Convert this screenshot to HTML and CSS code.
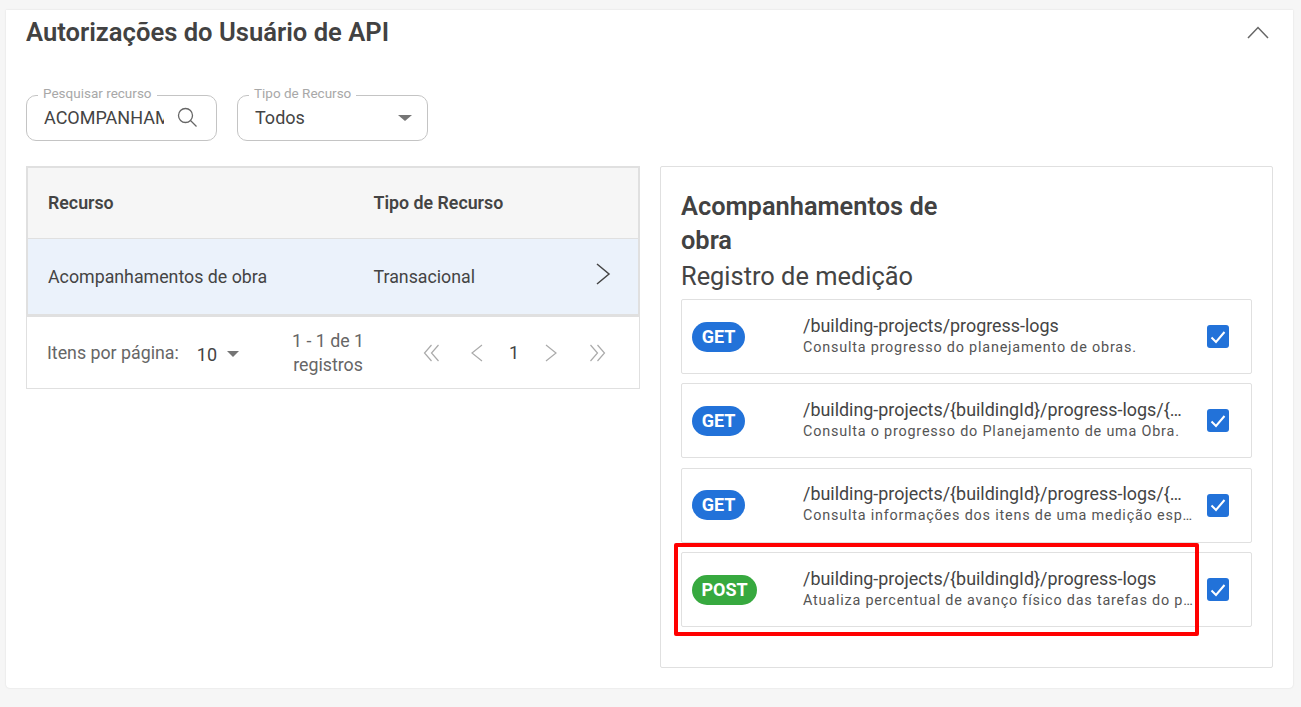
FILE: index.html
```html
<!DOCTYPE html>
<html lang="pt-BR">
<head>
<meta charset="utf-8">
<title>Autorizações do Usuário de API</title>
<link rel="stylesheet" href="styles.css">
</head>
<body>
<main class="card">
  <header class="card-head">
    <h1 class="card-title">Autorizações do Usuário de API</h1>
    <svg class="collapse" width="24" height="14" viewBox="0 0 24 14"><path d="M2 13 L12 2.500 L22 13" fill="none" stroke="#666" stroke-width="1.500"/></svg>
  </header>
  <div class="filters">
    <div class="field">
      <span class="field-label">Pesquisar recurso</span>
      <span class="field-value clip">ACOMPANHAM</span>
      <svg class="search-ic" width="22" height="22" viewBox="0 0 22 22"><circle cx="9.500" cy="9.500" r="7" fill="none" stroke="#666" stroke-width="1.300"/><path d="M14.500 14.500 L20.500 20.500" stroke="#666" stroke-width="1.300"/></svg>
    </div>
    <div class="field">
      <span class="field-label">Tipo de Recurso</span>
      <span class="field-value">Todos</span>
      <span class="caret caret-lg"></span>
    </div>
  </div>
  <div class="columns">
    <section class="table-box">
      <div class="t-head">
        <span class="col-a">Recurso</span>
        <span class="col-b">Tipo de Recurso</span>
      </div>
      <div class="t-row">
        <span class="col-a">Acompanhamentos de obra</span>
        <span class="col-b">Transacional</span>
        <svg class="row-arrow" width="16" height="24" viewBox="0 0 16 24"><path d="M2 2 L14 12 L2 22" fill="none" stroke="#444" stroke-width="1.500"/></svg>
      </div>
      <div class="pager">
        <span class="pager-label">Itens por página:</span>
        <span class="pager-size">10</span>
        <span class="caret"></span>
        <span class="pager-count">1 - 1 de 1<br>registros</span>
        <nav class="pager-nav">
          <svg width="18" height="18" viewBox="0 0 18 18"><path d="M8.500 1 L1.500 9 L8.500 17 M15.500 1 L8.500 9 L15.500 17" fill="none" stroke="#aaa" stroke-width="1.200"/></svg>
          <svg width="22" height="18" viewBox="0 0 22 18"><path d="M17 1 L7 9 L17 17" fill="none" stroke="#aaa" stroke-width="1.200"/></svg>
          <span class="page-num">1</span>
          <svg width="22" height="18" viewBox="0 0 22 18"><path d="M6 1 L16 9 L6 17" fill="none" stroke="#aaa" stroke-width="1.200"/></svg>
          <svg class="nav-last" width="18" height="18" viewBox="0 0 18 18"><path d="M2.500 1 L9.500 9 L2.500 17 M9.500 1 L16.500 9 L9.500 17" fill="none" stroke="#aaa" stroke-width="1.200"/></svg>
        </nav>
      </div>
    </section>
    <section class="detail">
      <h2 class="detail-title">Acompanhamentos de obra</h2>
      <p class="detail-sub">Registro de medição</p>
      <ul class="endpoints">
        <li class="endpoint">
          <span class="badge get">GET</span>
          <div class="ep-text">
            <div class="ep-path">/building-projects/progress-logs</div>
            <div class="ep-desc">Consulta progresso do planejamento de obras.</div>
          </div>
          <span class="check"><svg width="16" height="14" viewBox="0 0 16 14"><path d="M1.500 7.500 L6 12 L14.500 2" fill="none" stroke="#fff" stroke-width="2"/></svg></span>
        </li>
        <li class="endpoint">
          <span class="badge get">GET</span>
          <div class="ep-text">
            <div class="ep-path ep-cut">/building-projects/{buildingId}/progress-logs/{…</div>
            <div class="ep-desc">Consulta o progresso do Planejamento de uma Obra.</div>
          </div>
          <span class="check"><svg width="16" height="14" viewBox="0 0 16 14"><path d="M1.500 7.500 L6 12 L14.500 2" fill="none" stroke="#fff" stroke-width="2"/></svg></span>
        </li>
        <li class="endpoint">
          <span class="badge get">GET</span>
          <div class="ep-text">
            <div class="ep-path ep-cut">/building-projects/{buildingId}/progress-logs/{…</div>
            <div class="ep-desc">Consulta informações dos itens de uma medição esp…</div>
          </div>
          <span class="check"><svg width="16" height="14" viewBox="0 0 16 14"><path d="M1.500 7.500 L6 12 L14.500 2" fill="none" stroke="#fff" stroke-width="2"/></svg></span>
        </li>
        <li class="endpoint">
          <span class="badge post">POST</span>
          <div class="ep-text">
            <div class="ep-path">/building-projects/{buildingId}/progress-logs</div>
            <div class="ep-desc">Atualiza percentual de avanço físico das tarefas do p…</div>
          </div>
          <span class="check"><svg width="16" height="14" viewBox="0 0 16 14"><path d="M1.500 7.500 L6 12 L14.500 2" fill="none" stroke="#fff" stroke-width="2"/></svg></span>
          <span class="highlight"></span>
        </li>
      </ul>
    </section>
  </div>
</main>
</body>
</html>
```
FILE: styles.css
```css
* { box-sizing: border-box; }
html, body { margin: 0; height: 707px; overflow: hidden; }
body {
  background: #f6f6f6;
  font-family: Roboto, "Liberation Sans", sans-serif;
  color: #444;
  padding: 10px 8px 0 6px;
}
.card {
  height: 678px;
  background: #fff;
  border-radius: 0 0 4px 4px;
  box-shadow: 0 0 2px rgba(0,0,0,.12);
  padding: 0 20px 20px 20px;
}
.card-head {
  display: flex;
  justify-content: space-between;
  align-items: center;
  height: 44px;
}
.card-title { margin: 0; font-size: 25.600px; line-height: 44px; font-weight: 600; color: #424242; }
.collapse { margin: 0 3px 0 0; }
.filters { display: flex; gap: 20px; margin-top: 41px; }
.field {
  position: relative;
  width: 191px;
  height: 46px;
  border: 1px solid #c4c4c4;
  border-radius: 10px;
  display: flex;
  align-items: center;
  padding: 0 15px 2px 17px;
}
.field-label {
  position: absolute;
  left: 11px;
  top: -11px;
  padding: 0 5px;
  background: #fff;
  font-size: 13.500px;
  line-height: 16px;
  color: #a8a8a8;
}
.field-value { font-size: 18px; color: #444; flex: 1; min-width: 0; }
.clip { overflow: hidden; white-space: nowrap; margin-right: 12px; }
.search-ic { flex: none; margin-right: 3px; }
.caret { display: block; flex: none; width: 0; height: 0; border: solid transparent; border-width: 6px 6.500px 0; border-top-color: #757575; margin-top: 2px; }
.caret-lg { border-width: 6px 7px 0; margin: 2px 0 0; }
.columns { display: flex; gap: 20px; margin-top: 25px; align-items: flex-start; }
.table-box { width: 614px; border: 1px solid #e0e0e0; }
.t-head, .t-row { display: flex; align-items: center; position: relative; padding-left: 20px; }
.t-head {
  height: 72px;
  background: #f6f6f6;
  border: 1px solid #e0e0e0;
  padding-bottom: 2px;
  font-size: 17.800px;
  font-weight: 600;
}
.t-row { height: 78px; background: #ebf2fb; border-bottom: 3px solid #e0e0e0; border-left: 1px solid #e0e0e0; border-right: 1px solid #e0e0e0; font-size: 17.800px; }
.col-a { width: 325.500px; }
.row-arrow { position: absolute; right: 27px; top: 23px; }
.pager { display: flex; align-items: center; height: 71px; padding-left: 20px; font-size: 17.800px; color: #666; }
.pager-size { margin: 3px 0 0 18px; font-size: 18px; color: #444; }
.pager-size + .caret { margin-left: 10px; }
.pager-count { width: 90px; margin-left: 44px; text-align: center; line-height: 24px; padding-top: 1px; }
.pager-nav { display: flex; align-items: center; margin-left: 50px; gap: 24px; }
.page-num { color: #444; font-size: 18px; margin: 0 -3px 0 -2px; }
.nav-last { margin-left: 2px; }
.detail { width: 613px; height: 502px; border: 1px solid #e0e0e0; border-radius: 2px; padding: 22px 20px 0; }
.detail-title { margin: 0; width: 290px; font-size: 25.400px; line-height: 34px; font-weight: 600; color: #424242; }
.detail-sub { margin: 2px 0 6px; font-size: 25.400px; line-height: 34px; color: #444; }
.endpoints { list-style: none; margin: 0; padding: 0; display: flex; flex-direction: column; gap: 9.400px; }
.endpoint { position: relative; display: flex; align-items: center; height: 75px; border: 1px solid #e0e0e0; border-radius: 2px; padding: 0 22px 0 10px; }
.badge { height: 30px; line-height: 30px; border-radius: 15px; color: #fff; font-size: 18px; font-weight: 700; text-align: center; flex: none; }
.badge.get { width: 53px; background: #2272d9; margin-right: 58px; }
.badge.post { width: 65px; background: #37a93f; margin-right: 46px; }
.ep-text { width: 390px; flex: none; }
.ep-path { font-size: 17.900px; line-height: 20px; margin-bottom: 2px; white-space: nowrap; color: #444; }
.ep-desc { font-size: 14.400px; line-height: 20px; letter-spacing: .8px; white-space: nowrap; color: #555; }
.check { margin-left: auto; width: 22px; height: 23px; background: #2272d9; border-radius: 3px; display: flex; align-items: center; justify-content: center; flex: none; }
.highlight { position: absolute; left: -8px; top: -10px; width: 525px; height: 93px; border: 4px solid #f00; border-radius: 2px; pointer-events: none; }
```
